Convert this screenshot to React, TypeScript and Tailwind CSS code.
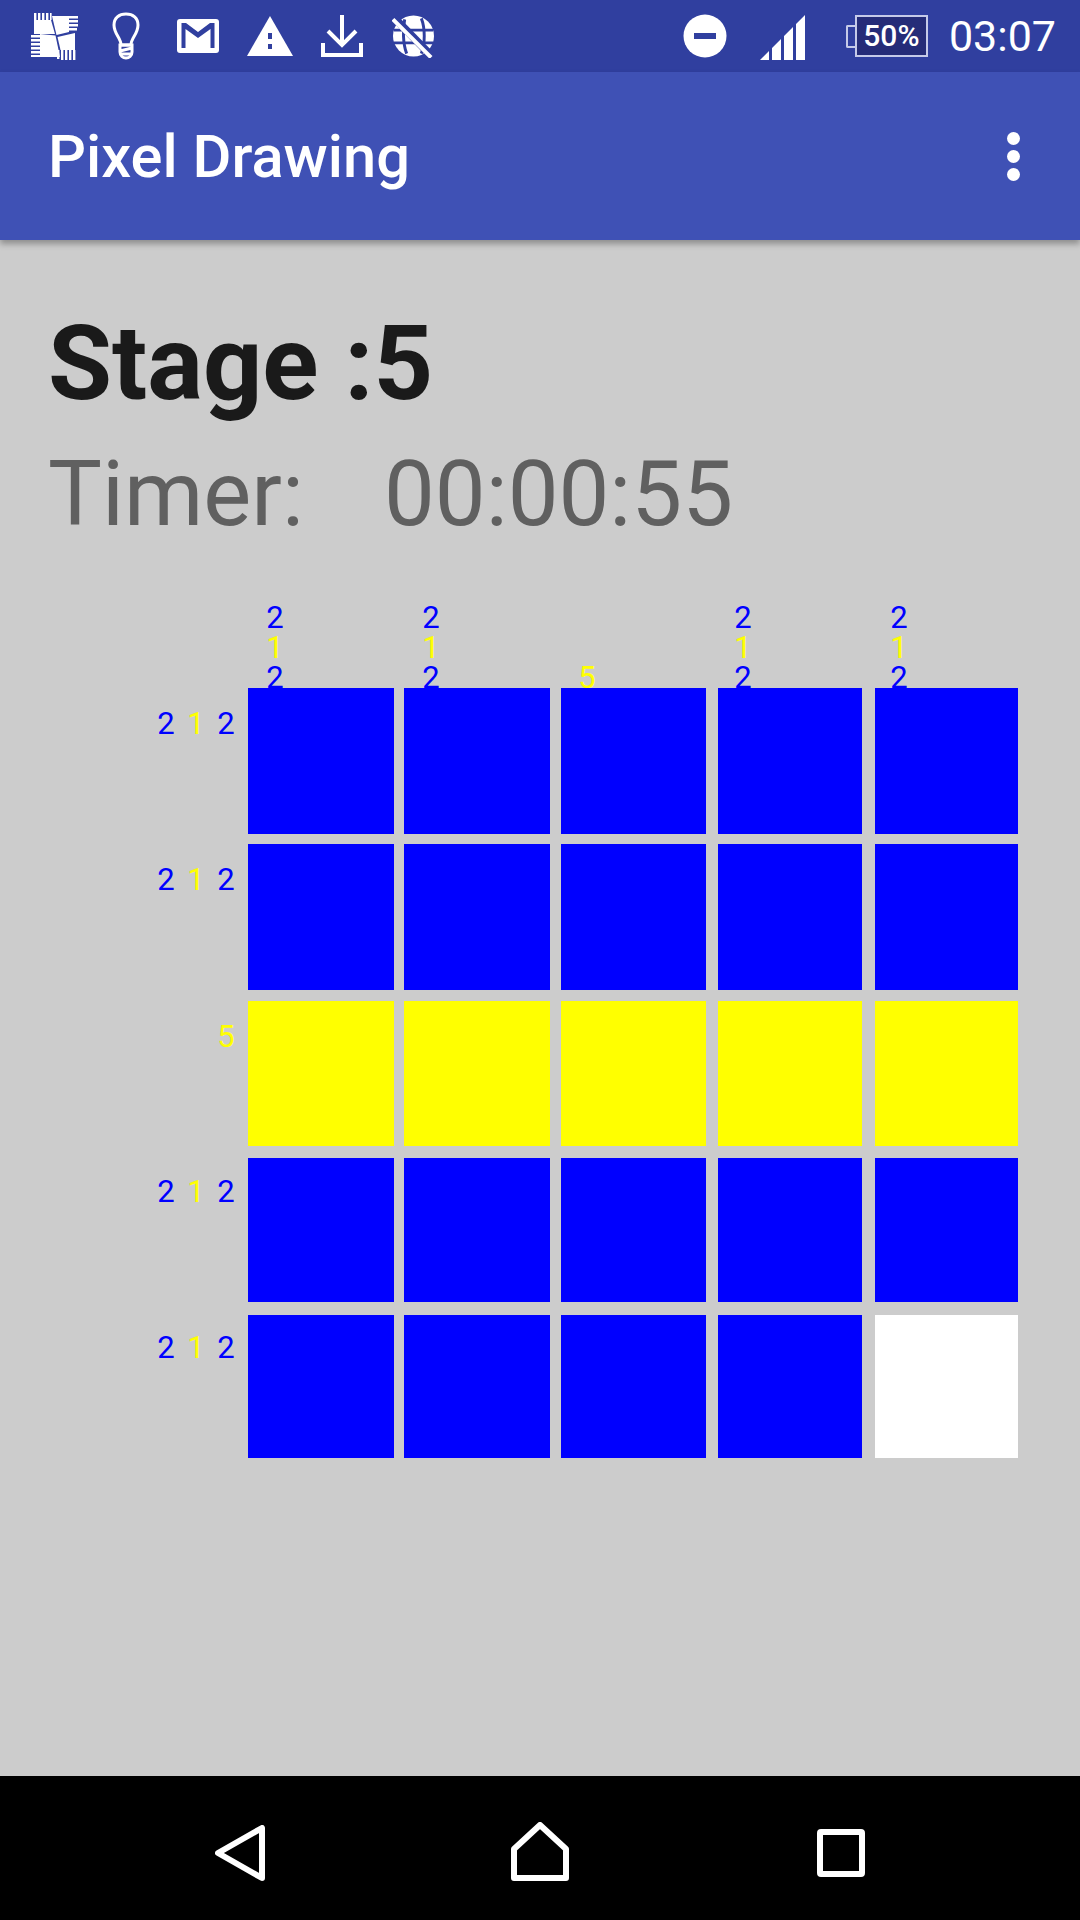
const widths = ['w-[146px]', 'w-[146px]', 'w-[145px]', 'w-[144px]', 'w-[143px]'];
const heights = ['h-[146px]', 'h-[146px]', 'h-[145px]', 'h-[144px]', 'h-[143px]'];
const columnOffsets = ['ml-[12px]', 'ml-[12px]', 'ml-[11px]', 'ml-[10px]', 'ml-[9px]'];
const rowOffsets = ['pt-[16px]', 'pt-[16px]', 'pt-[16px]', 'pt-[14px]', 'pt-[13px]'];

const BLUE = 'text-[#0000ff]';
const YELLOW = 'text-[#ffff00]';

const rows = [
  [2, 1, 2],
  [2, 1, 2],
  [5],
  [2, 1, 2],
  [2, 1, 2],
];

const cellColor = (row: number, col: number) => {
  if (row === 2) return 'bg-[#ffff00]';
  if (row === 4 && col === 4) return 'bg-white';
  return 'bg-[#0000ff]';
};

// a 5 or a 1 is a yellow run, a 2 is a blue run
const digitColor = (n: number) => (n === 2 ? BLUE : YELLOW);

const StatusIcons = () => (
  <div className="flex items-center">
    <svg width="47" height="47" viewBox="0 0 47 47" className="ml-[31px]" fill="#fff">
      <path d="M3 7H20L24 21H3Z" />
      <path d="M3 0h2.4v7H3zM7 0h2.4v7H7zM11 0h2.4v7H11zM15 0h2.4v7H15zM19 0h1.6v7H19z" />
      <path d="M21 3H38V19L25.5 22Z" />
      <path d="M38 3h9v2.4h-9zM38 7h9v2.4h-9zM38 11h9v2.4h-9zM38 15h8v2.4h-8z" />
      <path d="M9 21L24.5 22.5L29 44H9Z" />
      <path d="M0 22h9v2.4H0zM0 26h9v2.4H0zM0 30h9v2.4H0zM0 34h9v2.4H0zM0 38h9v2.4H0zM0 42h9v2H0z" />
      <path d="M26.5 24L44 20V37H29.5Z" />
      <path d="M26 37h2.4v9H26zM30 37h2.4v10H30zM34 37h2.4v10H34zM38 37h2.4v10H38zM42 37h2.4v10H42z" />
    </svg>
    <svg width="28" height="48" viewBox="0 0 28 48" className="ml-[34px]" fill="none" stroke="#fff" strokeWidth="3">
      <path d="M9 33C9 26 2 22 2 13C2 6 7 2 14 2S26 6 26 13C26 22 19 26 19 33Z" />
      <path d="M8 33H20V40C20 44 17 46 14 46S8 44 8 40ZM8 39L20 36M8 42H20" />
    </svg>
    <svg width="42" height="34" viewBox="0 0 42 34" className="ml-[37px]">
      <rect width="42" height="34" rx="3" fill="#fff" />
      <path d="M4.5 29V4H9L21 13L33 4H37.5V29H33.5V10L21 19L8.5 10V29Z" fill="#303f9f" />
    </svg>
    <svg width="46" height="40" viewBox="0 0 46 40" className="ml-[28px]">
      <path d="M23 0L46 40H0Z" fill="#fff" />
      <path d="M21 17h4v6h-4zM21 28h4v5h-4z" fill="#303f9f" />
    </svg>
    <svg width="42" height="42" viewBox="0 0 42 42" className="ml-[28px]" fill="none" stroke="#fff" strokeWidth="4">
      <path d="M21 0V30M7 16L21 30L35 16" />
      <path d="M2 28V40H40V28" />
    </svg>
    <svg width="43" height="44" viewBox="0 0 44 44" className="ml-[29px]" fill="#fff">
      <circle cx="22" cy="22" r="21" />
      <path d="M13 5C11 14 11 30 15 40M30 4C34 14 34 30 30 40M2 16H42M2 29H42" stroke="#303f9f" strokeWidth="3" fill="none" />
      <path d="M2 3L40 42" stroke="#303f9f" strokeWidth="8" />
      <path d="M1 5L40 44" stroke="#fff" strokeWidth="4" />
    </svg>
  </div>
);

const StatusRight = () => (
  <div className="flex items-center">
    <svg width="44" height="44" viewBox="0 0 44 44">
      <circle cx="22" cy="22" r="21.5" fill="#fff" />
      <rect x="11" y="19" width="22" height="6" fill="#303f9f" />
    </svg>
    <svg width="46" height="46" viewBox="0 0 46 46" className="ml-[33px] mt-[3px]" fill="#fff">
      <path d="M0 45L9 36V45ZM12 33L21 24V45H12ZM24 21L33 12V45H24ZM36 9L45 0V45H36Z" />
    </svg>
    <div className="ml-[40px] flex items-center">
      <div className="h-[23px] w-[9px] rounded-l-[2px] border-2 border-r-0 border-[#c5cae9] bg-[#303f9f]" />
      <div className="flex h-[42px] w-[73px] items-center justify-center border-2 border-[#c5cae9] bg-[#252c78] text-[30px] leading-none font-medium text-white">
        50%
      </div>
    </div>
    <span className="ml-[21px] text-[43px] leading-none text-white">03:07</span>
  </div>
);

const App = () => {
  return (
    <div className="flex h-[1920px] w-[1080px] flex-col overflow-hidden bg-[#cccccc] font-['Roboto',sans-serif]">
      <div className="flex h-[72px] items-center justify-between bg-[#303f9f] pr-[24px]">
        <StatusIcons />
        <StatusRight />
      </div>
      <div className="z-10 flex h-[168px] items-center justify-between bg-[#3f51b5] pr-[60px] pl-[48px] shadow-[0_4px_6px_rgba(0,0,0,0.3)]">
        <span className="mt-[4px] text-[59.6px] font-medium text-white">Pixel Drawing</span>
        <div className="flex flex-col gap-[5px]">
          <span className="h-[13px] w-[13px] rounded-full bg-white" />
          <span className="h-[13px] w-[13px] rounded-full bg-white" />
          <span className="h-[13px] w-[13px] rounded-full bg-white" />
        </div>
      </div>

      <div className="flex flex-1 flex-col">
        <div className="mt-[64px] pl-[48px] text-[104px] leading-[120px] font-bold text-[#1a1a1a]">Stage :5</div>
        <div className="mt-[20px] flex pl-[48px] text-[90.5px] leading-[100px] text-[#606060]">
          <span className="w-[336px]">Timer:</span>
          <span>00:00:55</span>
        </div>

        {/* cells are relative so they paint over the labels and trim the last digit */}
        <div className="mt-[50px] grid grid-cols-[248px_156px_157px_157px_157px_143px] grid-rows-[94px_156px_157px_157px_157px_143px]">
          <div />
          {rows.map((digits, col) => (
            <div key={col} className={`${columnOffsets[col]} -mb-[5px] flex w-[30px] flex-col justify-end text-center text-[31px] leading-[30px]`}>
              {digits.map((n, i) => (
                <span key={i} className={digitColor(n)}>{n}</span>
              ))}
            </div>
          ))}
          {rows.map((digits, row) => (
            <div key={row} className="contents">
              <div className={`flex justify-end ${rowOffsets[row]} pr-[7px] text-[31px] leading-[40px]`}>
                {digits.map((n, i) => (
                  <span key={i} className={`w-[30px] text-center ${digitColor(n)}`}>{n}</span>
                ))}
              </div>
              {[0, 1, 2, 3, 4].map((col) => (
                <div key={col} className={`relative ${widths[col]} ${heights[row]} ${cellColor(row, col)}`} />
              ))}
            </div>
          ))}
        </div>
      </div>

      <div className="flex h-[144px] items-center bg-black">
        <svg width="50" height="56" viewBox="0 0 50 56" className="ml-[215px] mt-[10px]" fill="none" stroke="#fff" strokeWidth="6" strokeLinejoin="round">
          <path d="M47 3V53L3 28Z" />
        </svg>
        <svg width="58" height="59" viewBox="0 0 58 59" className="ml-[246px] mt-[7px]" fill="none" stroke="#fff" strokeWidth="6" strokeLinejoin="round">
          <path d="M29 3L55 27V56H3V27Z" />
        </svg>
        <svg width="48" height="48" viewBox="0 0 48 48" className="ml-[248px] mt-[10px]" fill="none" stroke="#fff" strokeWidth="6" strokeLinejoin="round">
          <rect x="3" y="3" width="42" height="42" rx="1" />
        </svg>
      </div>
    </div>
  );
};

export default App;
